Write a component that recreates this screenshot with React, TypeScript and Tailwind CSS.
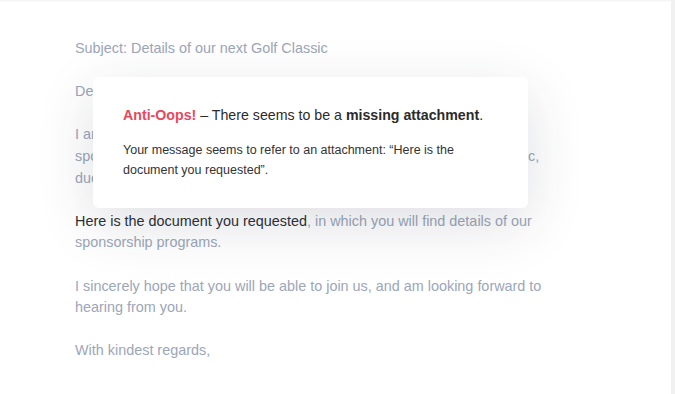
export default function App() {
  return (
    <div className="relative h-[394px] w-[675px] overflow-hidden bg-white font-['Liberation_Sans',Arial,sans-serif]">
      {/* faint top edge and scrollbar strip */}
      <div className="absolute inset-x-0 top-0 h-[2px] bg-gradient-to-b from-[#f0f0f0] to-white" />
      <div className="absolute right-0 top-0 h-full w-[4px] bg-[#f1f1f1]" />

      {/* email body */}
      <div className="w-[552px] pl-[75px] pt-[38px] text-[14.4px] leading-[21.6px] text-[#9ba6b9]">
        <p className="mb-[21.6px]">Subject: Details of our next Golf Classic</p>
        <p className="mb-[21.6px]">Dear Mr. Anderson,</p>
        <p className="mb-[21.6px]">
          I am writing on behalf of our committee to invite you to become
          <br />
          sponsorship partners of this year's annual Riverside Charity Golf Classic,
          <br />
          due to take place on Saturday, June 15th.
        </p>
        <p className="mb-[21.6px]">
          <span className="text-[#2b2f36]">Here is the document you requested</span>, in which you will find details of our sponsorship programs.
        </p>
        <p className="mb-[21.6px]">
          I sincerely hope that you will be able to join us, and am looking forward to hearing from you.
        </p>
        <p>With kindest regards,</p>
      </div>

      {/* Anti-Oops popup */}
      <div className="absolute left-[93px] top-[77px] h-[131px] w-[435px] rounded-[6px] bg-white pl-[30px] pt-[28px] shadow-[0_16px_56px_rgba(40,50,70,0.15)]">
        <p className="text-[14.2px] leading-[20px] text-[#2b2b2b]">
          <span className="font-bold text-[#e8485e]">Anti-Oops!</span> – There seems to be a{' '}
          <span className="font-bold">missing attachment</span>.
        </p>
        <p className="mt-[15px] w-[360px] text-[12.5px] leading-[20px] text-[#333]">
          Your message seems to refer to an attachment: “Here is the document you requested”.
        </p>
      </div>
    </div>
  )
}
